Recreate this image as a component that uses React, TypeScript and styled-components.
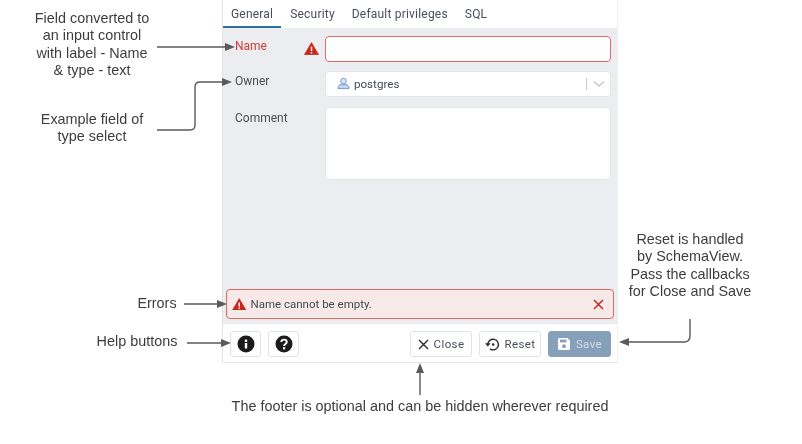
import React from 'react';
import styled, { createGlobalStyle } from 'styled-components';

const Global = createGlobalStyle`
  html, body { margin: 0; padding: 0; background: #fff; }
  body { font-family: "Liberation Sans", Arial, sans-serif; }
`;

const Canvas = styled.div`
  position: relative;
  width: 802px;
  height: 444px;
  overflow: hidden;
  background: #fff;
  filter: blur(0.4px);
`;

const Dialog = styled.div`
  position: absolute;
  left: 222px;
  top: 0;
  width: 396px;
  height: 363px;
  display: flex;
  flex-direction: column;
  box-sizing: border-box;
  border-left: 1px solid #e2e4e8;
  border-right: 1px solid #eef0f2;
  border-bottom: 1px solid #e6e8eb;
  font-family: Roboto, "Liberation Sans", sans-serif;
  color: #3f4650;
  font-size: 12px;
`;

const Tabs = styled.div`
  display: flex;
  gap: 1px;
  height: 28px;
  flex: none;
  background: #fff;
`;

const Tab = styled.div<{ $active?: boolean }>`
  box-sizing: border-box;
  flex: none;
  padding: 7px 8px 0;
  line-height: 14px;
  letter-spacing: 0.2px;
  color: #4a4f57;
  border-bottom: 2px solid ${p => (p.$active ? '#2f6f9f' : 'transparent')};
`;

const Body = styled.div`
  flex: 1;
  min-height: 0;
  background: #ebedf1;
  display: flex;
  flex-direction: column;
  padding: 8px 6px 4px 3px;
`;

const Row = styled.div<{ $h: number; $gap: number }>`
  display: flex;
  height: ${p => p.$h}px;
  margin-bottom: ${p => p.$gap}px;
  flex: none;
`;

const Label = styled.div<{ $error?: boolean; $top: number }>`
  width: 69px;
  flex: none;
  padding-left: 9px;
  padding-top: ${p => p.$top}px;
  line-height: 14px;
  color: ${p => (p.$error ? '#cf3d32' : '#4a4f57')};
`;

const ErrorSlot = styled.div`
  width: 21px;
  flex: none;
  display: flex;
  padding-top: 6px;
  box-sizing: border-box;
`;

const Control = styled.div<{ $error?: boolean }>`
  flex: 1;
  box-sizing: border-box;
  background: #fff;
  border-radius: 4px;
  border: 1px solid ${p => (p.$error ? '#dc6a60' : '#e4e6ea')};
`;

const SelectControl = styled(Control)`
  display: flex;
  align-items: center;
  padding: 0 0 1px 11px;
  color: #444a52;
  font-size: 11.6px;
  gap: 4px;
`;

const Value = styled.span`
  flex: 1;
`;

const Divider = styled.span`
  width: 1px;
  height: 12px;
  background: #c9ccd1;
  margin-right: -4px;
`;

const Chevron = styled.span`
  width: 23px;
  display: flex;
  justify-content: center;
`;

const Spacer = styled.div`
  flex: 1;
`;

const Alert = styled.div`
  height: 30px;
  flex: none;
  box-sizing: border-box;
  margin-right: -3px;
  background: #f7e9e8;
  border: 1px solid #dc6a60;
  border-radius: 4px;
  display: flex;
  align-items: center;
  padding: 0 9px 0 5px;
  gap: 4px;
  font-size: 11.5px;
  color: #444a52;
`;

const AlertText = styled.span`
  flex: 1;
`;

const Footer = styled.div`
  height: 39px;
  flex: none;
  box-sizing: border-box;
  background: #fff;
  border-top: 1px solid #e6e8eb;
  display: flex;
  align-items: flex-start;
  padding: 7px 6px 0 7px;
`;

const Button = styled.div<{ $w: number; $primary?: boolean; $gap?: number }>`
  width: ${p => p.$w}px;
  height: 26px;
  flex: none;
  box-sizing: border-box;
  margin-right: ${p => p.$gap ?? 0}px;
  display: flex;
  align-items: center;
  justify-content: center;
  gap: 5px;
  border-radius: 3px;
  border: 1px solid ${p => (p.$primary ? '#87a0ba' : '#dfe2e7')};
  background: ${p => (p.$primary ? '#87a0ba' : '#fff')};
  color: ${p => (p.$primary ? '#d3dde7' : '#4a4f57')};
  font-size: 11.5px;
  letter-spacing: 0.4px;
`;

const Note = styled.div<{ $x: number; $y: number; $w: number }>`
  position: absolute;
  left: ${p => p.$x}px;
  top: ${p => p.$y}px;
  width: ${p => p.$w}px;
  text-align: center;
  font-family: "Liberation Sans", Arial, sans-serif;
  font-size: 14.4px;
  line-height: 17.3px;
  color: #3d3d3d;
  white-space: pre-line;
`;

const Overlay = styled.svg`
  position: absolute;
  left: 0;
  top: 0;
  width: 802px;
  height: 444px;
  pointer-events: none;
`;

const Warn = ({ size = 15 }: { size?: number }) => (
  <svg width={size} height={size * 0.87} viewBox="0 0 24 21">
    <path d="M12 1 L23.5 20.5 H.5 Z" fill="#c5281c" stroke="#c5281c" strokeLinejoin="round" />
    <rect x="10.8" y="7.5" width="2.4" height="7" fill="#fff" />
    <rect x="10.8" y="16" width="2.4" height="2.4" fill="#fff" />
  </svg>
);

const Arrow = ({ d, tip }: { d: string; tip: string }) => (
  <>
    <path d={d} fill="none" stroke="#5a5a5a" strokeWidth="1.4" />
    <polygon points={tip} fill="#5a5a5a" />
  </>
);

export default function App() {
  return (
    <Canvas>
      <Global />
      <Dialog>
        <Tabs>
          <Tab $active>General</Tab>
          <Tab>Security</Tab>
          <Tab>Default privileges</Tab>
          <Tab>SQL</Tab>
        </Tabs>
        <Body>
          <Row $h={26} $gap={9}>
            <Label $error $top={3}>Name</Label>
            <ErrorSlot><Warn /></ErrorSlot>
            <Control $error />
          </Row>
          <Row $h={26} $gap={10}>
            <Label $top={3}>Owner</Label>
            <ErrorSlot />
            <SelectControl>
              <svg width="13" height="13" viewBox="0 0 14 14">
                <circle cx="7" cy="4.4" r="3" fill="#dbe5f5" stroke="#6f95d0" strokeWidth="1" />
                <path d="M1 12.5 C1 9.5 2.5 8.2 4.5 8.2 H9.5 C11.5 8.2 13 9.5 13 12.5 Z" fill="#c7d6ee" stroke="#6f95d0" strokeWidth="1" strokeLinejoin="round" />
              </svg>
              <Value>postgres</Value>
              <Divider />
              <Chevron>
                <svg width="12" height="8" viewBox="0 0 12 8">
                  <path d="M1 1.5 L6 6 L11 1.5" fill="none" stroke="#c5c8cc" strokeWidth="1.4" />
                </svg>
              </Chevron>
            </SelectControl>
          </Row>
          <Row $h={73} $gap={0}>
            <Label $top={4}>Comment</Label>
            <ErrorSlot />
            <Control />
          </Row>
          <Spacer />
          <Alert>
            <Warn size={14.5} />
            <AlertText>Name cannot be empty.</AlertText>
            <svg width="11" height="11" viewBox="0 0 11 11">
              <path d="M1 1 L10 10 M10 1 L1 10" stroke="#c5281c" strokeWidth="1.5" />
            </svg>
          </Alert>
        </Body>
        <Footer>
          <Button $w={31} $gap={7}>
            <svg width="18" height="18" viewBox="0 0 18 18">
              <circle cx="9" cy="9" r="8.5" fill="#1b1b1b" />
              <rect x="7.8" y="8" width="2.4" height="5.5" fill="#fff" />
              <rect x="7.8" y="4.6" width="2.4" height="2.3" fill="#fff" />
            </svg>
          </Button>
          <Button $w={31}>
            <svg width="18" height="18" viewBox="0 0 18 18">
              <circle cx="9" cy="9" r="8.5" fill="#1b1b1b" />
              <path d="M6.3 7 C6.3 3.8 11.8 3.8 11.8 7 C11.8 9 9.1 9 9.1 11" fill="none" stroke="#fff" strokeWidth="1.9" />
              <rect x="8" y="12.2" width="2.2" height="2.2" fill="#fff" />
            </svg>
          </Button>
          <Spacer />
          <Button $w={62} $gap={7}>
            <svg width="11" height="11" viewBox="0 0 11 11">
              <path d="M1 1 L10 10 M10 1 L1 10" stroke="#2c2c2c" strokeWidth="1.4" />
            </svg>
            Close
          </Button>
          <Button $w={62} $gap={7}>
            <svg width="15" height="15" viewBox="0 0 24 24">
              <path d="M4.5 12 A8.5 8.5 0 1 1 8 19" fill="none" stroke="#2c2c2c" strokeWidth="2.2" />
              <path d="M0 10 L4.5 15 L9 10 Z" fill="#2c2c2c" />
              <circle cx="13" cy="12" r="2" fill="#2c2c2c" />
            </svg>
            Reset
          </Button>
          <Button $w={63} $primary>
            <svg width="14" height="14" viewBox="0 0 14 14">
              <path d="M1 2.5 A1.5 1.5 0 0 1 2.5 1 H10.5 L13 3.5 V11.5 A1.5 1.5 0 0 1 11.5 13 H2.5 A1.5 1.5 0 0 1 1 11.5 Z" fill="#fff" />
              <rect x="3" y="2.6" width="6.5" height="2.8" fill="#87a0ba" />
              <circle cx="7" cy="9.2" r="1.9" fill="#87a0ba" />
            </svg>
            Save
          </Button>
        </Footer>
      </Dialog>

      <Note $x={12} $y={10} $w={160}>{'Field converted to\nan input control\nwith label - Name\n& type - text'}</Note>
      <Note $x={12} $y={111} $w={160}>{'Example field of\ntype select'}</Note>
      <Note $x={112} $y={295} $w={90}>Errors</Note>
      <Note $x={82} $y={333} $w={110}>Help buttons</Note>
      <Note $x={190} $y={398} $w={460}>The footer is optional and can be hidden wherever required</Note>
      <Note $x={600} $y={231} $w={180}>{'Reset is handled\nby SchemaView.\nPass the callbacks\nfor Close and Save'}</Note>

      <Overlay viewBox="0 0 802 444">
        <Arrow d="M157 47 H226" tip="225,43 235,47 225,51" />
        <Arrow d="M157 130 H190 Q195 130 195 125 V87 Q195 82 200 82 H224" tip="222,78 232,82 222,86" />
        <Arrow d="M184 304 H218" tip="217,300 227,304 217,308" />
        <Arrow d="M187 343 H222" tip="221,339 231,343 221,347" />
        <Arrow d="M420 395 V372" tip="416,373 420,363 424,373" />
        <Arrow d="M690 319 V336 Q690 342 684 342 H628" tip="629,338 619,342 629,346" />
      </Overlay>
    </Canvas>
  );
}
